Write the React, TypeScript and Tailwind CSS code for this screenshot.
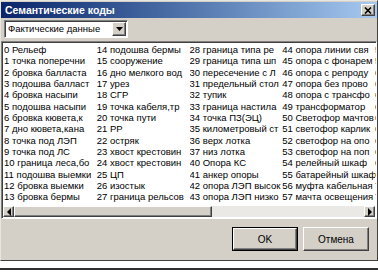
const columns: string[][] = [
  [
    "0 Рельеф",
    "1 точка поперечни",
    "2 бровка балласта",
    "3 подошва балласт",
    "4 бровка насыпи",
    "5 подошва насыпи",
    "6 бровка кювета,к",
    "7 дно кювета,кана",
    "8 точка под ЛЭП",
    "9 точка под ЛС",
    "10 граница леса,бо",
    "11 подошва выемки",
    "12 бровка выемки",
    "13 бровка бермы",
  ],
  [
    "14 подошва бермы",
    "15 сооружение",
    "16 дно мелкого вод",
    "17 урез",
    "18 СГР",
    "19 точка кабеля,тр",
    "20 точка пути",
    "21 РР",
    "22 остряк",
    "23 хвост крестовин",
    "24 хвост крестовин",
    "25 ЦП",
    "26 изостык",
    "27 граница рельсов",
  ],
  [
    "28 граница типа ре",
    "29 граница типа шп",
    "30 пересечение с Л",
    "31 предельный стол",
    "32 тупик",
    "33 граница настила",
    "34 точка ПЗ(ЭЦ)",
    "35 километровый ст",
    "36 верх лотка",
    "37 низ лотка",
    "40 Опора КС",
    "41 анкер опоры",
    "42 опора ЛЭП высок",
    "43 опора ЛЭП низко",
  ],
  [
    "44 опора линии свя",
    "45 опора с фонарем",
    "46 опора с репроду",
    "47 опора без прово",
    "48 опора с трансфо",
    "49 трансформатор",
    "50 Светофор мачтов",
    "51 светофор карлик",
    "52 светофор на опо",
    "53 светофор на поп",
    "54 релейный шкаф",
    "55 батарейный шкаф",
    "56 муфта кабельная",
    "57 мачта освещения",
  ],
  [
    "58 прожектор",
    "59 прожекторная",
    "60 стрелка",
    "61 стрелочный",
    "62 колодец",
    "63 люк",
    "64 труба",
    "65 мост",
    "66 переезд",
    "67 платформа",
    "68 здание",
    "69 забор",
    "70 ограждение",
    "71 столб",
  ],
];

const raised =
  "border border-t-white border-l-white border-r-[#404040] border-b-[#404040] bg-[#d4d0c8] shadow-[inset_-1px_-1px_0_#808080]";

function Arrow({ dir }: { dir: "left" | "right" | "down" }) {
  const points =
    dir === "left" ? "5,1 5,9 1,5" : dir === "right" ? "1,1 1,9 5,5" : "1,2 8,2 4.5,6";
  return (
    <svg width={dir === "down" ? 9 : 6} height={dir === "down" ? 8 : 10} viewBox={dir === "down" ? "0 0 9 8" : "0 0 6 10"}>
      <polygon points={points} fill="#000" />
    </svg>
  );
}

export default function App() {
  return (
    <div
      className="relative h-[276px] w-[378px] overflow-hidden bg-white"
      style={{ fontFamily: '"Liberation Sans", Arial, sans-serif' }}
    >
      <div className="flex h-[261px] w-[378px] flex-col border border-t-[#e8e6e0] border-l-[#e8e6e0] border-r-[#404040] border-b-[#404040] bg-[#d4d0c8] pt-[1px]">
        {/* title bar */}
        <div className="flex h-[16px] items-center justify-between bg-gradient-to-r from-[#0a246a] to-[#a6caf0] pl-[4px] pr-[2px]">
          <span className="text-[10.5px] font-bold leading-none text-white">Семантические коды</span>
          <div className={`flex h-[12px] w-[14px] items-center justify-center ${raised}`}>
            <svg width="8" height="7" viewBox="0 0 8 7">
              <path d="M1 0.5 L7 6.5 M7 0.5 L1 6.5" stroke="#000" strokeWidth="1.6" />
            </svg>
          </div>
        </div>

        {/* combo */}
        <div className="ml-[3px] mt-[2px] flex h-[18px] w-[124px] items-center border border-t-[#808080] border-l-[#808080] border-r-white border-b-white bg-white shadow-[inset_1px_1px_0_#404040]">
          <span className="flex-1 pl-[3px] text-[9.5px] leading-none text-black">Фактические данные</span>
          <div className={`mr-[1px] flex h-[14px] w-[14px] items-center justify-center ${raised}`}>
            <Arrow dir="down" />
          </div>
        </div>

        {/* list box */}
        <div className="mt-[3px] flex h-[178px] flex-col border border-t-[#808080] border-l-[#808080] border-r-white border-b-white bg-white shadow-[inset_1px_1px_0_#404040]">
          <div className="flex h-[164px] overflow-hidden pl-[2px] pt-[2px]">
            {columns.map((col, ci) => (
              <div key={ci} className="w-[92.75px] shrink-0 overflow-hidden">
                {col.map((item) => (
                  <div
                    key={item}
                    className="h-[11.33px] whitespace-nowrap text-[9.5px] leading-[11.33px] text-black"
                  >
                    {item}
                  </div>
                ))}
              </div>
            ))}
          </div>
          <div className="ml-[1px] mr-[1px] flex h-[11px]">
            <div className={`flex w-[11px] items-center justify-center ${raised}`}>
              <Arrow dir="left" />
            </div>
            <div className={`w-[198px] ${raised}`} />
            <div className="flex-1 bg-[#ebe9e5]" />
            <div className={`flex w-[11px] items-center justify-center ${raised}`}>
              <Arrow dir="right" />
            </div>
          </div>
        </div>

        {/* buttons */}
        <div className="mt-[8px] flex justify-end gap-[5px] pr-[8px]">
          <div className="flex h-[24px] w-[66px] items-center justify-center border border-black">
            <div className={`flex h-full w-full items-center justify-center text-[10px] text-black ${raised}`}>
              OK
            </div>
          </div>
          <div className={`flex h-[24px] w-[66px] items-center justify-center text-[10px] text-black ${raised}`}>
            Отмена
          </div>
        </div>
      </div>
      <div className="mt-[7px] h-[2px] w-full bg-[#303030]" />
    </div>
  );
}
